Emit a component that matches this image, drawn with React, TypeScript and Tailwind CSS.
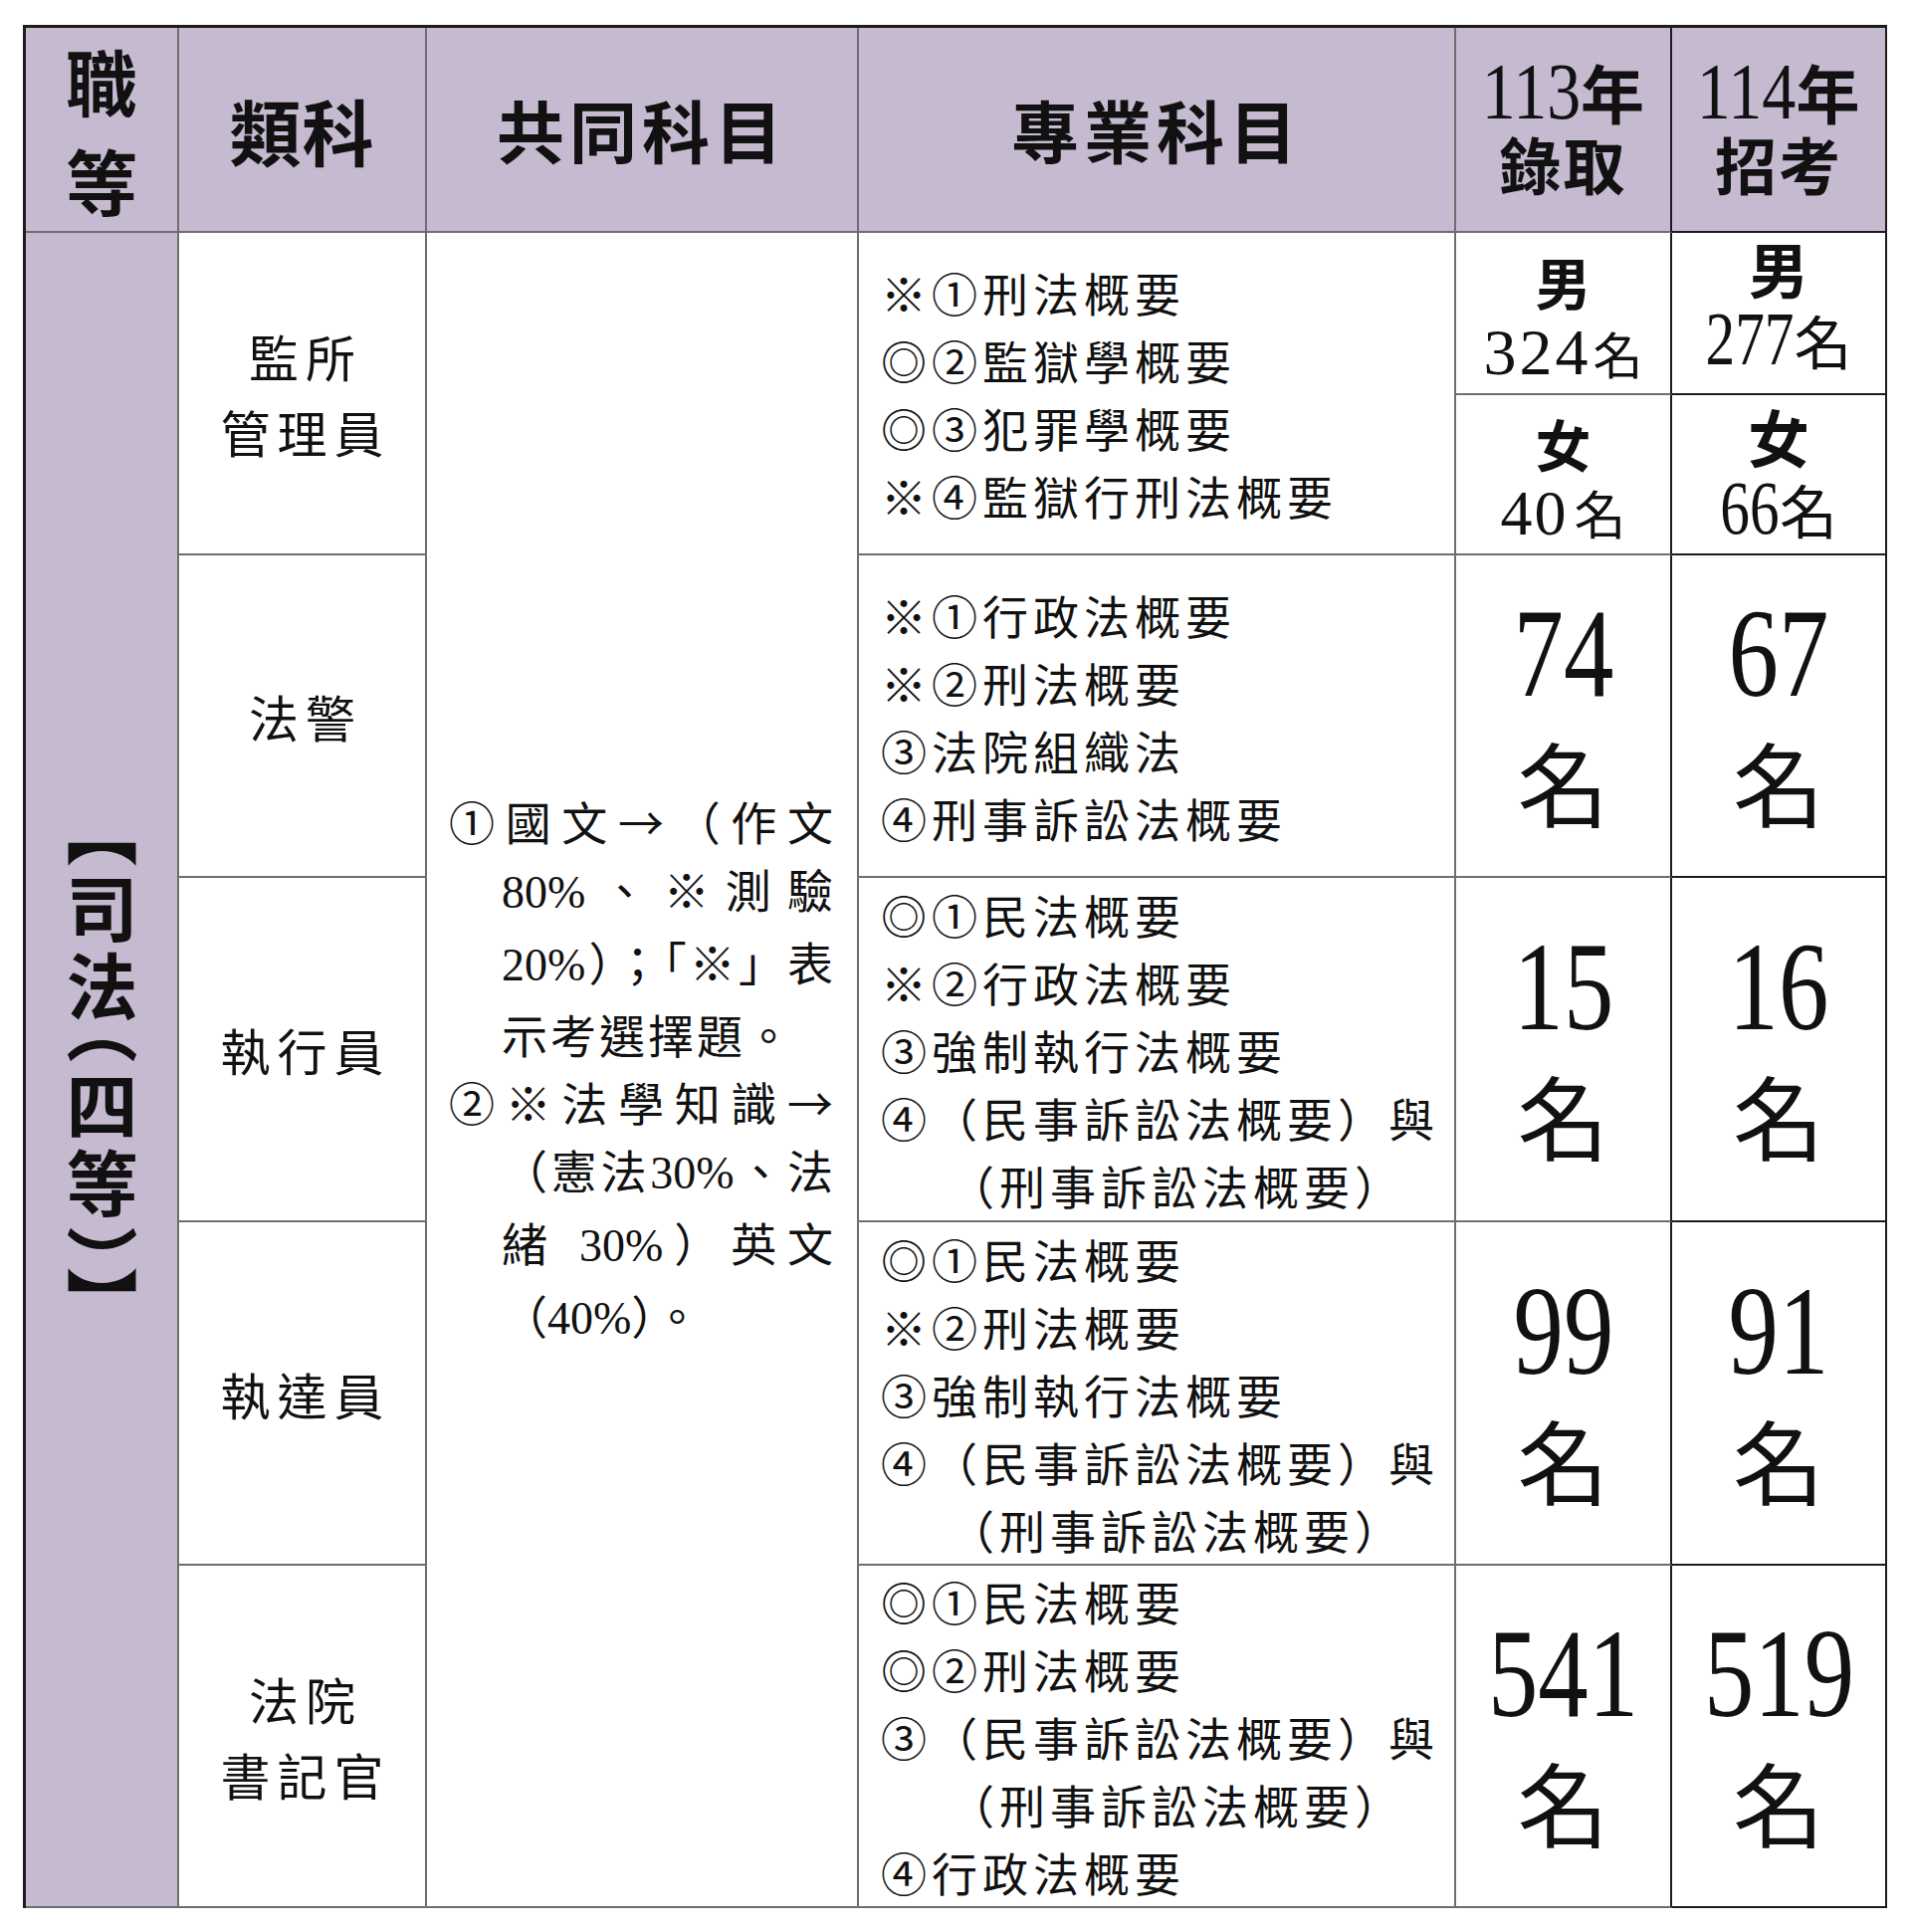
import React from 'react';

type Line = { text: React.ReactNode; indent?: boolean };

interface ExamRow {
  pos: string;
  category: string[];
  subjects: Line[];
}

const gridLine = 'border-r-2 border-b-2 border-[#6e6e6e]';
const col5Line = 'border-r-2 border-b-2 border-b-[#6e6e6e] border-r-[#1c1c1c]';
const col6Line = 'border-r-2 border-b-2 border-[#1c1c1c]';
const head = 'bg-[#c5bad0]';
const serif = "font-['Liberation_Serif',serif]";

const rows: ExamRow[] = [
  {
    pos: 'row-start-2 row-span-2',
    category: ['監所', '管理員'],
    subjects: [
      { text: '※①刑法概要' },
      { text: '◎②監獄學概要' },
      { text: '◎③犯罪學概要' },
      { text: '※④監獄行刑法概要' },
    ],
  },
  {
    pos: 'row-start-4',
    category: ['法警'],
    subjects: [
      { text: '※①行政法概要' },
      { text: '※②刑法概要' },
      { text: '③法院組織法' },
      { text: '④刑事訴訟法概要' },
    ],
  },
  {
    pos: 'row-start-5',
    category: ['執行員'],
    subjects: [
      { text: '◎①民法概要' },
      { text: '※②行政法概要' },
      { text: '③強制執行法概要' },
      { text: '④（民事訴訟法概要）與' },
      { text: '（刑事訴訟法概要）', indent: true },
    ],
  },
  {
    pos: 'row-start-6',
    category: ['執達員'],
    subjects: [
      { text: '◎①民法概要' },
      { text: '※②刑法概要' },
      { text: '③強制執行法概要' },
      { text: '④（民事訴訟法概要）與' },
      { text: '（刑事訴訟法概要）', indent: true },
    ],
  },
  {
    pos: 'row-start-7',
    category: ['法院', '書記官'],
    subjects: [
      { text: '◎①民法概要' },
      { text: '◎②刑法概要' },
      { text: '③（民事訴訟法概要）與' },
      { text: '（刑事訴訟法概要）', indent: true },
      { text: '④行政法概要' },
    ],
  },
];

// counts for the single-number rows (113 admitted, 114 openings)
const counts: { pos: string; a: string; b: string }[] = [
  { pos: 'row-start-4', a: '74', b: '67' },
  { pos: 'row-start-5', a: '15', b: '16' },
  { pos: 'row-start-6', a: '99', b: '91' },
  { pos: 'row-start-7', a: '541', b: '519' },
];

function Big({ n }: { n: string }) {
  return (
    <div className="flex flex-col items-center justify-center pb-[14px]">
      <span className={`inline-block ${serif} text-[126px] leading-[126px] scale-x-[0.8]`}>{n}</span>
      <span className="mt-[18px] text-[92px] leading-[92px]">名</span>
    </div>
  );
}

function Num({ children }: { children: React.ReactNode }) {
  return <span className={serif}>{children}</span>;
}

export default function App() {
  return (
    <div className="w-[1920px] h-[1941px] bg-white pt-[25px] pl-[23px] text-[#111] font-['Noto_Sans_CJK_TC',sans-serif]">
      <div className="grid w-fit grid-cols-[154px_249px_434px_600px_217px_216px] grid-rows-[206px_163px_161px_324px_346px_345px_344px] border-l-[3px] border-t-[3px] border-[#1c1c1c]">
        {/* header row */}
        <div className={`col-start-1 row-start-1 ${head} ${gridLine} flex flex-col items-center justify-center text-[72px] font-bold leading-[100px]`}>
          <span>職</span>
          <span>等</span>
        </div>
        <div className={`col-start-2 row-start-1 ${head} ${gridLine} flex items-center justify-center text-[72px] font-bold tracking-[1px]`}>
          類科
        </div>
        <div className={`col-start-3 row-start-1 ${head} ${gridLine} flex items-center justify-center text-[68px] font-bold tracking-[5px]`}>
          共同科目
        </div>
        <div className={`col-start-4 row-start-1 ${head} ${gridLine} flex items-center justify-center text-[68px] font-bold tracking-[5px]`}>
          專業科目
        </div>
        <div className={`col-start-5 row-start-1 ${head} ${col5Line} flex flex-col items-center justify-center pb-[12px]`}>
          <div className="flex items-baseline">
            <span className={`inline-block ${serif} -mx-[9px] text-[80px] leading-[80px] scale-x-[0.85]`}>113</span>
            <span className="text-[64px] font-bold leading-[64px]">年</span>
          </div>
          <div className="text-[62px] font-bold leading-[64px] tracking-[2px]">錄取</div>
        </div>
        <div className={`col-start-6 row-start-1 ${head} ${col6Line} flex flex-col items-center justify-center pb-[12px]`}>
          <div className="flex items-baseline">
            <span className={`inline-block ${serif} -mx-[9px] text-[80px] leading-[80px] scale-x-[0.85]`}>114</span>
            <span className="text-[64px] font-bold leading-[64px]">年</span>
          </div>
          <div className="text-[62px] font-bold leading-[64px] tracking-[2px]">招考</div>
        </div>

        {/* grade column */}
        <div className={`col-start-1 row-start-2 row-span-6 ${head} ${gridLine} flex items-center justify-center`}>
          <div className="[writing-mode:vertical-rl] [font-feature-settings:'vhal'] text-[72px] font-bold leading-none tracking-[6px]">
            【司法（四等）】
          </div>
        </div>

        {/* common subjects */}
        <div className={`col-start-3 row-start-2 row-span-6 ${gridLine} flex flex-col justify-center pl-[22px] pr-[24px] text-[46px] leading-[68px]`}>
          <div className="text-justify [text-align-last:justify]">①國文→（作文</div>
          <div className="pl-[53px] text-justify [text-align-last:justify]">
            <Num>80%</Num>、※測驗
          </div>
          <div className="pl-[53px] text-justify [text-align-last:justify]">
            <Num>20%</Num>）；「※」表
          </div>
          <div className="pl-[53px] tracking-[3px]">示考選擇題。</div>
          <div className="text-justify [text-align-last:justify]">②※法學知識→</div>
          <div className="pl-[53px] text-justify [text-align-last:justify]">
            （憲法<Num>30%</Num>、法
          </div>
          <div className="pl-[53px] text-justify [text-align-last:justify]">
            緒 <Num>30%</Num>）英文
          </div>
          <div className="pl-[53px]">
            （<Num>40%</Num>）。
          </div>
        </div>

        {rows.map((r) => (
          <React.Fragment key={r.category.join('')}>
            <div className={`col-start-2 ${r.pos} ${gridLine} flex flex-col items-center justify-center pl-[7px] text-[50px] leading-[76px] tracking-[7px]`}>
              {r.category.map((c) => (
                <span key={c}>{c}</span>
              ))}
            </div>
            <div className={`col-start-4 ${r.pos} ${gridLine} flex flex-col justify-center pl-[22px] text-[46px] leading-[68px] tracking-[5px] whitespace-nowrap`}>
              {r.subjects.map((s, i) => (
                <div key={i} className={s.indent ? 'pl-[68px]' : ''}>
                  {s.text}
                </div>
              ))}
            </div>
          </React.Fragment>
        ))}

        {/* row 1 split by gender */}
        <div className={`col-start-5 row-start-2 ${col5Line} flex flex-col items-center justify-center leading-[78px]`}>
          <span className="text-[56px] font-bold">男</span>
          <div className="flex items-baseline">
            <span className={`${serif} text-[66px] leading-none tracking-[3px]`}>324</span>
            <span className="ml-[2px] text-[50px] leading-none">名</span>
          </div>
        </div>
        <div className={`col-start-5 row-start-3 ${col5Line} flex flex-col items-center justify-center leading-[78px]`}>
          <span className="text-[56px] font-bold">女</span>
          <div className="flex items-baseline">
            <span className={`${serif} text-[64px] leading-none tracking-[2px]`}>40</span>
            <span className="ml-[6px] text-[52px] leading-none">名</span>
          </div>
        </div>
        <div className={`col-start-6 row-start-2 ${col6Line} flex flex-col items-center justify-center pb-[16px] leading-[67px]`}>
          <span className="text-[60px] font-bold">男</span>
          <div className="flex items-baseline">
            <span className={`inline-block ${serif} -ml-[12px] -mr-[13px] text-[76px] leading-none scale-x-[0.78]`}>277</span>
            <span className="text-[58px] leading-none">名</span>
          </div>
        </div>
        <div className={`col-start-6 row-start-3 ${col6Line} flex flex-col items-center justify-center leading-[67px]`}>
          <span className="text-[62px] font-bold">女</span>
          <div className="flex items-baseline">
            <span className={`inline-block ${serif} -mx-[8px] text-[76px] leading-none scale-x-[0.78]`}>66</span>
            <span className="text-[58px] leading-none">名</span>
          </div>
        </div>

        {counts.map((c) => (
          <React.Fragment key={c.a}>
            <div className={`col-start-5 ${c.pos} ${col5Line} flex items-center justify-center`}>
              <Big n={c.a} />
            </div>
            <div className={`col-start-6 ${c.pos} ${col6Line} flex items-center justify-center`}>
              <Big n={c.b} />
            </div>
          </React.Fragment>
        ))}
      </div>
    </div>
  );
}
